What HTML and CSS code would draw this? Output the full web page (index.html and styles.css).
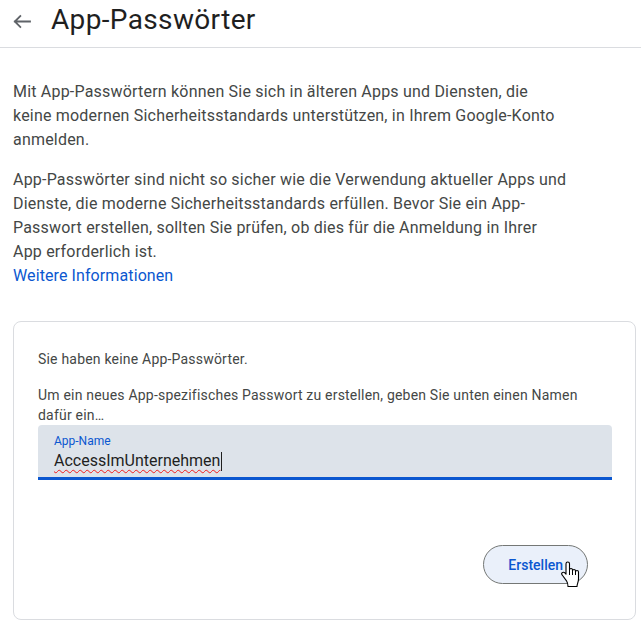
FILE: index.html
```html
<!DOCTYPE html>
<html lang="de">
<head>
<meta charset="utf-8">
<title>App-Passwörter</title>
<link rel="stylesheet" href="styles.css">
</head>
<body>
<header class="topbar">
  <button class="back" aria-label="Zurück">
    <svg width="24" height="24" viewBox="0 0 24 24"><path d="M20 12.5H4.8M10.3 7L4.8 12.5L10.3 18" fill="none" stroke="#5f6368" stroke-width="1.8" stroke-linecap="square"/></svg>
  </button>
  <h1 class="title">App-Passwörter</h1>
</header>
<main class="content">
  <p class="intro">Mit App-Passwörtern können Sie sich in älteren Apps und Diensten, die<br>keine modernen Sicherheitsstandards unterstützen, in Ihrem Google-Konto<br>anmelden.</p>
  <p class="intro second">App-Passwörter sind nicht so sicher wie die Verwendung aktueller Apps und<br>Dienste, die moderne Sicherheitsstandards erfüllen. Bevor Sie ein App-<br>Passwort erstellen, sollten Sie prüfen, ob dies für die Anmeldung in Ihrer<br>App erforderlich ist.<br><a class="link" href="#">Weitere Informationen</a></p>
  <section class="card">
    <p class="card-text">Sie haben keine App-Passwörter.</p>
    <p class="card-text last">Um ein neues App-spezifisches Passwort zu erstellen, geben Sie unten einen Namen<br>dafür ein…</p>
    <div class="field">
      <div class="field-label">App-Name</div>
      <div class="field-value"><span class="typed">AccessImUnternehmen</span><span class="caret"></span></div>
    </div>
    <div class="actions">
      <div class="btn-wrap">
        <button class="btn">Erstellen</button>
        <svg class="pointer" width="20" height="27" viewBox="0 0 20 27"><path d="M5 2.75A1.75 1.75 0 0 1 8.5 2.75V9A1.5 1.5 0 0 1 11.5 9V10A1.5 1.5 0 0 1 14.5 10V11A1.5 1.5 0 0 1 17.5 11V18C17.5 21 16 23 16 25.5H7C7 23.5 6.5 21.5 5.5 19.8L1.2 14A1.6 1.6 0 0 1 3.6 11.7L5 13.2Z" fill="#fff" stroke="#000" stroke-width="1.1" stroke-linejoin="round"/><path d="M8.5 9V14M11.5 10V14M14.5 11V14" stroke="#000" stroke-width="1"/></svg>
      </div>
    </div>
  </section>
</main>
</body>
</html>
```
FILE: styles.css
```css
html, body {
  margin: 0;
  padding: 0;
  background: #ffffff;
}
body {
  font-family: Roboto, "Liberation Sans", Arial, sans-serif;
  color: #444746;
}
.topbar {
  display: flex;
  align-items: flex-start;
  height: 47px;
  border-bottom: 1px solid #dadce0;
  padding-left: 10px;
}
.back {
  margin: 9px 0 0 0;
  padding: 0;
  border: 0;
  background: none;
  width: 24px;
  height: 24px;
  display: block;
}
.back svg { display: block; }
.title {
  margin: 2px 0 0 17px;
  font-size: 28px;
  line-height: 36px;
  font-weight: 400;
  letter-spacing: 0.35px;
  color: #1f1f1f;
}
.content {
  padding: 0 5px 0 13px;
}
.intro {
  margin: 32px 0 0 0;
  font-size: 16px;
  line-height: 24px;
  letter-spacing: 0.2px;
}
.intro.second {
  margin-top: 16px;
}
.link {
  color: #0b57d0;
  text-decoration: none;
  letter-spacing: 0.1px;
}
.card {
  margin-top: 33px;
  border: 1px solid #dadce0;
  border-radius: 8px;
  padding: 27px 23px 35px 24px;
}
.card-text {
  margin: 0 0 16px 0;
  font-size: 14px;
  line-height: 20px;
  letter-spacing: 0.2px;
}
.card-text.last {
  margin-bottom: 0;
}
.field {
  background: #dde3ea;
  border-radius: 4px 4px 0 0;
  border-bottom: 3px solid #0b57d0;
  padding: 8px 16px 4px 16px;
}
.field-label {
  font-size: 12px;
  line-height: 16px;
  color: #0b57d0;
}
.field-value {
  display: flex;
  align-items: center;
  font-size: 16px;
  line-height: 24px;
  color: #1f1f1f;
}
.typed {
  text-decoration: underline wavy #f01c1c;
  text-decoration-thickness: 1px;
  text-underline-offset: 3px;
  text-decoration-skip-ink: none;
}
.caret {
  display: inline-block;
  width: 1px;
  height: 19px;
  background: #1f1f1f;
  margin-left: 1px;
}
.actions {
  display: flex;
  justify-content: flex-end;
  margin-top: 65px;
  padding-right: 24px;
}
.btn-wrap {
  position: relative;
}
.btn {
  box-sizing: border-box;
  height: 39px;
  padding: 0 24px;
  border: 1px solid #747775;
  border-radius: 20px;
  background: #eaf0fa;
  color: #0b57d0;
  font-family: Roboto, "Liberation Sans", Arial, sans-serif;
  font-size: 14px;
  font-weight: 500;
  display: block;
}
.pointer {
  position: absolute;
  left: 78px;
  top: 16px;
}
```
